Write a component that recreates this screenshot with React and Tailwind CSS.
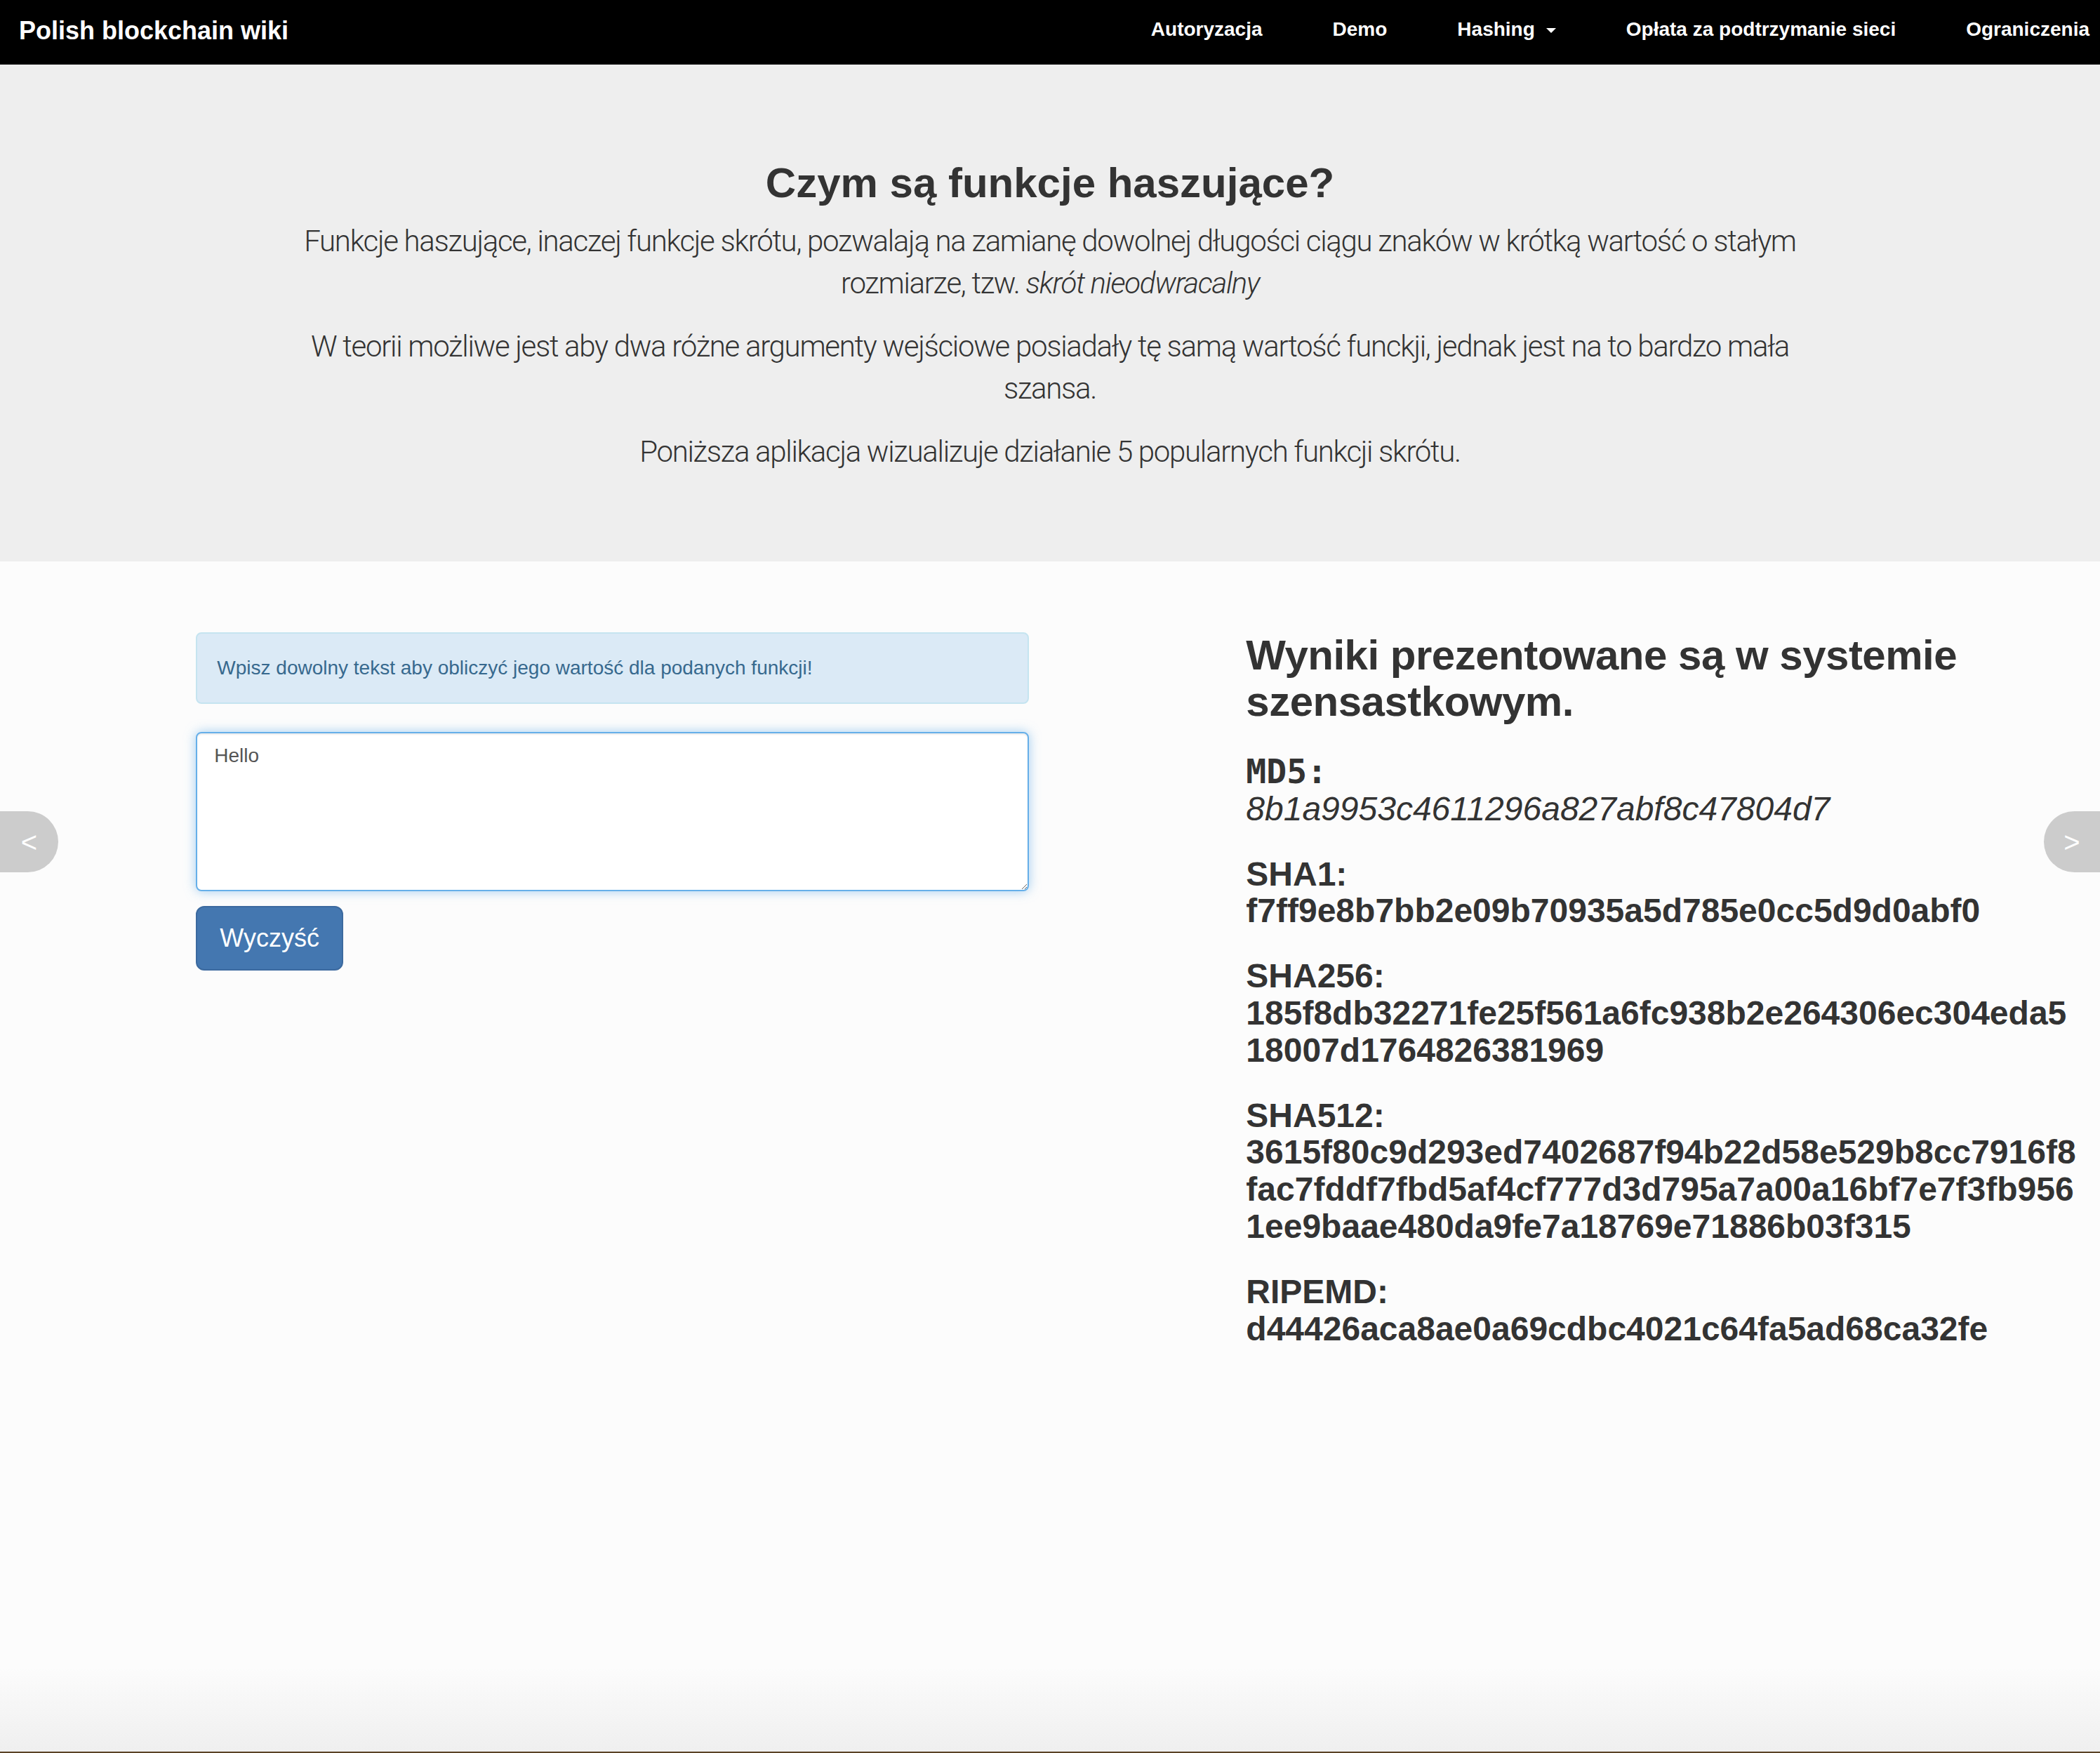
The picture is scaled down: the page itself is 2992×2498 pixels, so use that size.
import { useState } from 'react';

const navLinks = ['Autoryzacja', 'Demo', 'Hashing', 'Opłata za podtrzymanie sieci', 'Ograniczenia'];

const hashes = [
    { label: 'MD5:', value: '8b1a9953c4611296a827abf8c47804d7', md5: true },
    { label: 'SHA1:', value: 'f7ff9e8b7bb2e09b70935a5d785e0cc5d9d0abf0' },
    { label: 'SHA256:', value: '185f8db32271fe25f561a6fc938b2e264306ec304eda518007d1764826381969' },
    { label: 'SHA512:', value: '3615f80c9d293ed7402687f94b22d58e529b8cc7916f8fac7fddf7fbd5af4cf777d3d795a7a00a16bf7e7f3fb9561ee9baae480da9fe7a18769e71886b03f315' },
    { label: 'RIPEMD:', value: 'd44426aca8ae0a69cdbc4021c64fa5ad68ca32fe' },
];

const App = () => {
    const [text, setText] = useState('Hello');

    return (
        <div className="relative min-h-[2498px] flex flex-col bg-[#fcfcfc] text-[#333] font-['Liberation_Sans',Arial,sans-serif]">
            {/* Navbar */}
            <nav className="h-[92px] bg-black flex items-start text-white shrink-0">
                <a className="pl-[27px] mt-[24px] text-[36px] leading-[40px] font-bold">Polish blockchain wiki</a>
                <ul className="ml-auto flex gap-[100px] pr-[15px] mt-[22px]">
                    {navLinks.map(link => (
                        <li key={link} className="flex items-center text-[28px] leading-[40px] font-bold">
                            {link}
                            {link === 'Hashing' && (
                                <span className="ml-[16px] mt-[2px] w-0 h-0 border-l-[7px] border-r-[7px] border-t-[7px] border-l-transparent border-r-transparent border-t-white"></span>
                            )}
                        </li>
                    ))}
                </ul>
            </nav>

            {/* Jumbotron */}
            <section className="bg-[#eeeeee] pt-[96px] pb-[96px] shrink-0">
                <div className="w-[2210px] mx-auto text-center">
                    <h2 className="mt-[40px] mb-[20px] text-[60px] leading-[66px] font-bold">Czym są funkcje haszujące?</h2>
                    <div className="font-['Roboto','Liberation_Sans',sans-serif] font-light text-[42px] leading-[60px] tracking-[-1.3px]">
                        <p className="mb-[30px]">
                            Funkcje haszujące, inaczej funkcje skrótu, pozwalają na zamianę dowolnej długości ciągu znaków w krótką wartość o stałym rozmiarze, tzw. <em>skrót nieodwracalny</em>
                        </p>
                        <p className="mb-[30px]">
                            W teorii możliwe jest aby dwa różne argumenty wejściowe posiadały tę samą wartość funckji, jednak jest na to bardzo mała szansa.
                        </p>
                        <p className="mb-[30px]">
                            Poniższa aplikacja wizualizuje działanie 5 popularnych funkcji skrótu.
                        </p>
                    </div>
                </div>
            </section>

            {/* Main */}
            <main className="flex-1 pt-[101px]">
                <div className="grid grid-cols-12">
                    <div className="col-start-2 col-span-5 px-[30px]">
                        <div className="bg-[#dbeaf6] border-2 border-[#c5e4f0] rounded-[8px] px-[28px] py-[29px] text-[28px] leading-[40px] text-[#37698e]">
                            Wpisz dowolny tekst aby obliczyć jego wartość dla podanych funkcji!
                        </div>
                        <textarea
                            value={text}
                            onChange={(e) => setText(e.target.value)}
                            className="mt-[40px] block w-full h-[227px] bg-white border-2 border-[#66afe9] rounded-[8px] px-[24px] py-[12px] text-[28px] leading-[40px] text-[#555] outline-none shadow-[inset_0_2px_2px_rgba(0,0,0,0.075),0_0_16px_rgba(102,175,233,0.6)]"
                        />
                        <button
                            onClick={() => setText('')}
                            className="mt-[21px] bg-[#4477b0] border-2 border-[#3c6a9f] rounded-[12px] px-[32px] py-[20px] text-[36px] leading-[48px] text-white"
                        >
                            Wyczyść
                        </button>
                    </div>

                    <div className="col-start-8 col-span-5 px-[30px] flex flex-col gap-[40px]">
                        <h2 className="text-[60px] leading-[66px] font-bold tracking-[-0.5px]">Wyniki prezentowane są w systemie szensastkowym.</h2>
                        {hashes.map(h => (
                            <h3 key={h.label} className="text-[48px] leading-[1.1] font-bold break-all">
                                {h.md5 ? (
                                    <span className="font-['DejaVu_Sans_Mono',monospace]">{h.label}</span>
                                ) : (
                                    h.label
                                )}
                                <br />
                                {h.md5 ? <i className="font-normal">{h.value}</i> : h.value}
                            </h3>
                        ))}
                    </div>
                </div>
            </main>

            {/* bottom edge */}
            <div className="h-[120px] shrink-0 bg-gradient-to-b from-[#fcfcfc] to-[#efefef]"></div>
            <div className="h-[2px] shrink-0 bg-[#5b4226]"></div>

            {/* side arrows */}
            <button className="absolute left-0 top-[1156px] w-[83px] h-[87px] bg-[#cccccc] rounded-r-full text-white text-[40px] leading-none flex items-center justify-center">
                &lt;
            </button>
            <button className="absolute right-0 top-[1156px] w-[80px] h-[87px] bg-[#cccccc] rounded-l-full text-white text-[40px] leading-none flex items-center justify-center">
                &gt;
            </button>
        </div>
    );
};

export default App;
